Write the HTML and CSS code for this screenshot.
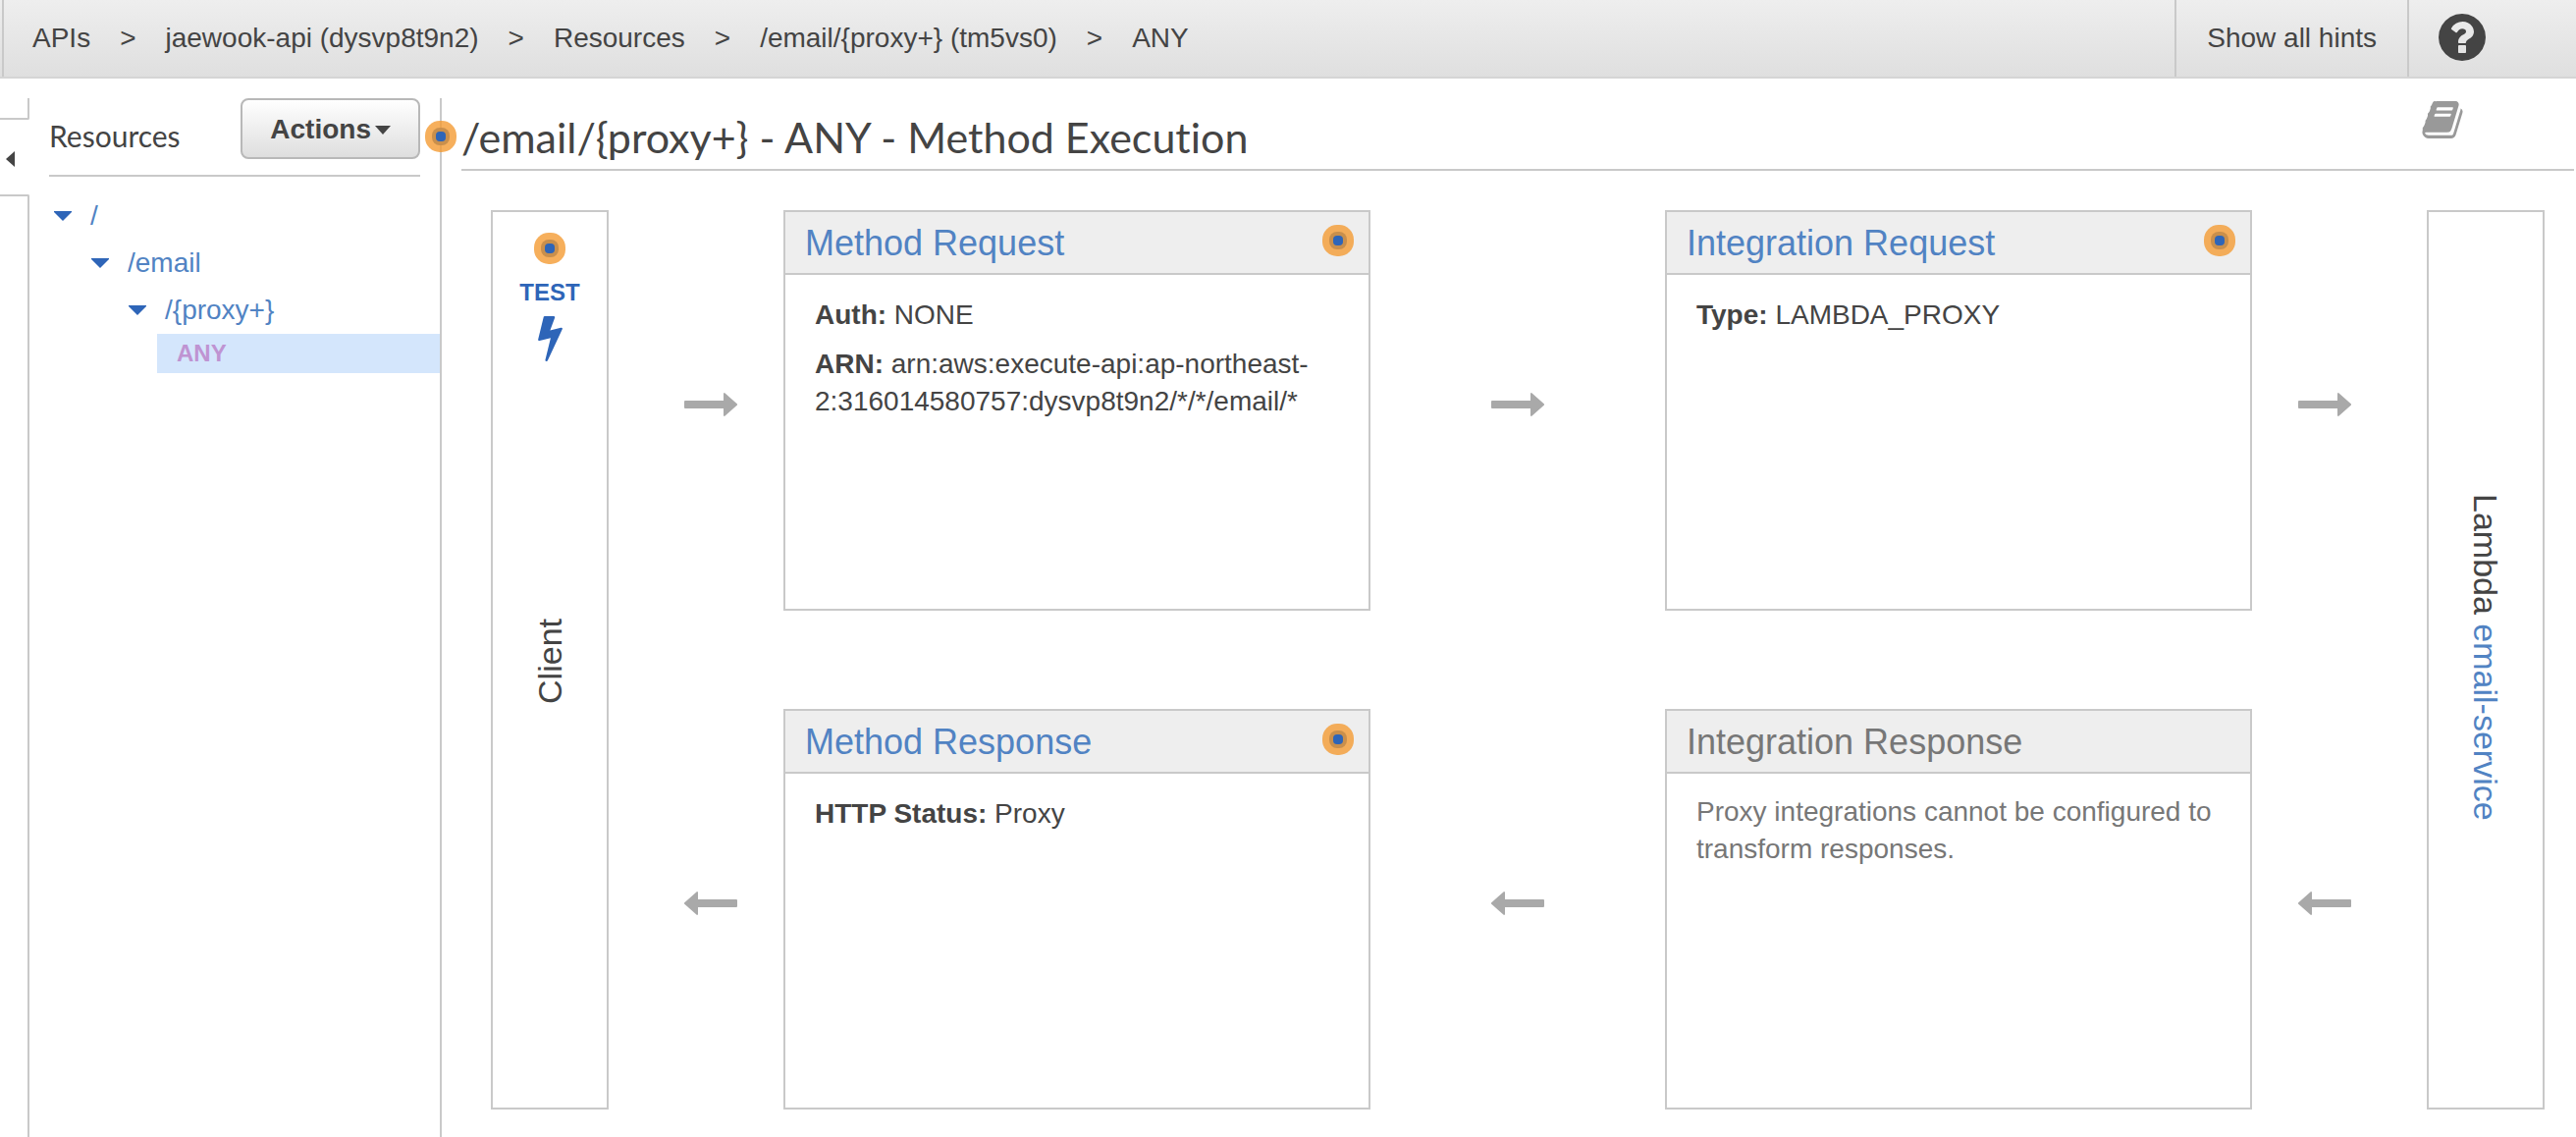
FILE: index.html
```html
<!DOCTYPE html>
<html lang="en">
<head>
<meta charset="utf-8">
<title>API Gateway - Method Execution</title>
<link rel="stylesheet" href="styles.css">
</head>
<body>
<svg class="defs" aria-hidden="true">
  <symbol id="hint" viewBox="0 0 32 32">
    <rect width="32" height="32" rx="15" fill="#f49b33" fill-opacity=".8"/>
    <rect x="7" y="7" width="18" height="18" rx="8" fill="#c98f4c"/>
    <rect x="11" y="11" width="10" height="10" rx="4" fill="#2e65b8"/>
  </symbol>
  <symbol id="arrow-right" viewBox="0 0 54 24">
    <path d="M1 8h39V1q0-1 1-1l13 11.500v1L41 24q-1 0-1-1v-7H1q-1 0-1-1V9q0-1 1-1z" fill="#a9a9a9"/>
  </symbol>
  <symbol id="arrow-left" viewBox="0 0 54 24">
    <path d="M53 8H14V1q0-1-1-1L0 11.500v1L13 24q1 0 1-1v-7h39q1 0 1-1V9q0-1-1-1z" fill="#a9a9a9"/>
  </symbol>
</svg>

<header class="topbar">
  <nav class="crumbs" aria-label="Breadcrumb">
    <a href="#apis">APIs</a><span class="sep">&gt;</span>
    <a href="#api">jaewook-api (dysvp8t9n2)</a><span class="sep">&gt;</span>
    <a href="#resources">Resources</a><span class="sep">&gt;</span>
    <a href="#resource">/email/{proxy+} (tm5vs0)</a><span class="sep">&gt;</span>
    <a href="#method">ANY</a>
  </nav>
  <button class="hints" type="button">Show all hints</button>
  <a class="help" href="#help" aria-label="Help">
    <svg class="help-icon" viewBox="128 128 1536 1536"><path fill="#444" d="M1024 1376v-192q0-14-9-23t-23-9h-192q-14 0-23 9t-9 23v192q0 14 9 23t23 9h192q14 0 23-9t9-23zm256-672q0-88-55.500-163t-138.500-116-170-41q-243 0-371 213-15 24 8 42l132 100q7 6 19 6 16 0 25-12 53-68 86-92 34-24 86-24 48 0 85.500 26t37.500 59q0 38-20 61t-68 45q-63 28-115.500 86.500t-52.500 125.500v36q0 14 9 23t23 9h192q14 0 23-9t9-23q0-19 21.500-49.500t54.500-49.500q32-18 49-28.500t46-35 44.500-48 28-60.500 12.500-81zm384 192q0 209-103 385.500t-279.500 279.500-385.500 103-385.500-103-279.500-279.500-103-385.500 103-385.500 279.500-279.500 385.500-103 385.500 103 279.500 279.500 103 385.500z"/></svg>
  </a>
</header>

<div class="workspace">
  <div class="rail">
    <div class="rail-top"></div>
    <button class="collapse" type="button" aria-label="Collapse panel">
      <svg class="collapse-icon" viewBox="0 0 9 16"><path d="M9 0v16L0 8z" fill="#444"/></svg>
    </button>
    <div class="rail-bottom"></div>
  </div>

  <aside class="sidebar">
    <div class="sidebar-head">
      <h2 class="sidebar-title">Resources</h2>
      <button class="actions" type="button">Actions<svg class="actions-caret" viewBox="0 0 16 9"><path d="M0 0h16L8 9z" fill="#444"/></svg></button>
    </div>
    <ul class="tree">
      <li class="node"><svg class="caret" viewBox="0 0 18 10"><path d="M0 0h18v1L9 10 0 1z" fill="#2e65b8"/></svg><a href="#root">/</a></li>
      <li class="node level-1"><svg class="caret" viewBox="0 0 18 10"><path d="M0 0h18v1L9 10 0 1z" fill="#2e65b8"/></svg><a href="#email">/email</a></li>
      <li class="node level-2"><svg class="caret" viewBox="0 0 18 10"><path d="M0 0h18v1L9 10 0 1z" fill="#2e65b8"/></svg><a href="#proxy">/{proxy+}</a></li>
      <li class="leaf"><a href="#any">ANY</a></li>
    </ul>
  </aside>

  <main class="content">
    <div class="title-row">
      <svg class="hint title-hint"><use href="#hint"/></svg>
      <h1 class="title">/email/{proxy+} - ANY - Method Execution</h1>
      <a class="docs" href="#docs" aria-label="Documentation">
        <svg class="docs-icon" viewBox="64 128 1664 1536"><path fill="#999" d="M1703 478q40 57 18 129l-275 906q-19 64-76.500 107.500t-122.500 43.500h-923q-77 0-148.500-53.500t-99.500-131.500q-24-67-2-127 0-4 3-27t4-37q1-8-3-21.500t-3-19.500q2-11 8-21t16.500-23.500 16.500-23.500q23-38 45-91.500t30-91.500q3-10 .5-30t-.5-28q3-11 17-28t17-23q21-36 42-92t25-90q1-9-2.500-32t.5-28q4-13 22-30.500t22-22.500q19-26 42.500-84.500t27.500-96.500q1-8-3-25.500t-2-26.500q2-8 9-18t18-23 17-21q8-12 16.500-30.500t15-35 16-36 19.500-32 26.500-23.500 36-11.500 47.500 5.500l-1 3q38-9 51-9h761q74 0 114 56t18 130l-274 906q-36 119-71.500 153.500t-128.500 34.500h-869q-27 0-38 15-11 16-1 43 24 70 144 70h923q29 0 56-15.500t35-41.500l300-987q7-22 5-57 38 15 59 43zm-1064 2q-4 13 2 22.500t20 9.500h608q13 0 25.500-9.500t16.500-22.500l21-64q4-13-2-22.500t-20-9.500h-608q-13 0-25.500 9.500t-16.500 22.500zm-83 256q-4 13 2 22.500t20 9.500h608q13 0 25.500-9.500t16.500-22.500l21-64q4-13-2-22.500t-20-9.500h-608q-13 0-25.500 9.500t-16.500 22.500z"/></svg>
      </a>
    </div>

    <div class="flow">
      <section class="endpoint client">
        <a class="test" href="#test">
          <svg class="hint"><use href="#hint"/></svg>
          <span class="test-label">TEST</span>
          <svg class="bolt" viewBox="448 128 896 1664"><path fill="#2e65b8" d="M1333 566q18 20 7 44l-540 1157q-13 25-42 25-4 0-14-2-17-5-25.500-19t-4.500-30l197-808-406 101q-4 1-12 1-18 0-31-11-18-15-13-39l201-825q4-14 16-23t28-9h328q19 0 32 12.500t13 29.500q0 8-5 18l-171 463 396-98q8-2 12-2 19 0 34 15z"/></svg>
        </a>
        <div class="endpoint-label client-label">Client</div>
      </section>

      <svg class="arrow out-client"><use href="#arrow-right"/></svg>
      <section class="card">
        <div class="card-head"><h3><a href="#method-request">Method Request</a></h3><svg class="hint"><use href="#hint"/></svg></div>
        <div class="card-body">
          <p><b>Auth:</b> NONE</p>
          <p><b>ARN:</b> arn:aws:execute-api:ap-northeast-2:316014580757:dysvp8t9n2/*/*/email/*</p>
        </div>
      </section>
      <svg class="arrow"><use href="#arrow-right"/></svg>
      <section class="card">
        <div class="card-head"><h3><a href="#integration-request">Integration Request</a></h3><svg class="hint"><use href="#hint"/></svg></div>
        <div class="card-body"><p><b>Type:</b> LAMBDA_PROXY</p></div>
      </section>
      <svg class="arrow out-lambda"><use href="#arrow-right"/></svg>

      <section class="endpoint lambda">
        <div class="endpoint-label">Lambda <a href="#lambda">email-service</a></div>
      </section>

      <svg class="arrow out-client"><use href="#arrow-left"/></svg>
      <section class="card">
        <div class="card-head"><h3><a href="#method-response">Method Response</a></h3><svg class="hint"><use href="#hint"/></svg></div>
        <div class="card-body"><p><b>HTTP Status:</b> Proxy</p></div>
      </section>
      <svg class="arrow"><use href="#arrow-left"/></svg>
      <section class="card muted">
        <div class="card-head"><h3>Integration Response</h3></div>
        <div class="card-body"><p>Proxy integrations cannot be configured to transform responses.</p></div>
      </section>
      <svg class="arrow out-lambda"><use href="#arrow-left"/></svg>
    </div>
  </main>
</div>
</body>
</html>
```
FILE: styles.css
```css
* {
  box-sizing: border-box;
}

body {
  margin: 0;
  min-height: 100vh;
  display: flex;
  flex-direction: column;
  background: #fff;
  color: #444;
  font: 28px/38px "Liberation Sans", Arial, sans-serif;
}

h1, h2, h3, p, ul {
  margin: 0;
  padding: 0;
  font-weight: normal;
}

a {
  color: #5183c3;
  text-decoration: none;
}

button {
  font: inherit;
  color: inherit;
  cursor: pointer;
}

svg {
  display: block;
  flex: none;
}

.defs {
  position: absolute;
  width: 0;
  height: 0;
}

.hint {
  width: 32px;
  height: 32px;
}

/* Top bar */
.topbar {
  display: flex;
  height: 80px;
  padding-left: 2px;
  border-bottom: 2px solid #d5d5d5;
  background: linear-gradient(#eee, #dfdfdf);
}

.crumbs {
  flex: 1;
  display: flex;
  align-items: center;
  padding-left: 29px;
  border-left: 2px solid #c9c9c9;
  white-space: nowrap;
}

.crumbs a {
  color: #444;
}

.sep {
  margin: 0 30px;
}

.hints {
  padding: 0 31px;
  border: solid #c9c9c9;
  border-width: 0 2px;
  background: none;
}

.help {
  display: flex;
  align-items: center;
  padding: 0 92px 2px 30px;
}

.help-icon {
  width: 48px;
  height: 48px;
}

/* Workspace */
.workspace {
  flex: 1;
  display: flex;
  padding-top: 20px;
}

.rail {
  width: 30px;
  display: flex;
  flex-direction: column;
}

.rail-top {
  height: 22px;
  border: solid #c9c9c9;
  border-width: 0 2px 2px 0;
  border-bottom-right-radius: 2px;
}

.collapse {
  height: 76px;
  padding: 4px 0 0 6px;
  border: 0;
  background: none;
}

.collapse-icon {
  width: 9px;
  height: 16px;
}

.rail-bottom {
  flex: 1;
  border: solid #c9c9c9;
  border-width: 2px 2px 0 0;
  border-top-right-radius: 2px;
}

.sidebar {
  width: 420px;
  padding-left: 20px;
  border-right: 2px solid #c9c9c9;
}

.sidebar-head {
  display: flex;
  justify-content: space-between;
  margin-right: 20px;
  padding-bottom: 16px;
  border-bottom: 2px solid #c9c9c9;
}

.sidebar-title {
  padding-top: 19px;
  font-family: Lato, sans-serif;
  font-size: 30px;
}

.actions {
  display: flex;
  align-items: center;
  gap: 4px;
  height: 62px;
  padding: 2px 28px 0;
  border: 2px solid #b8b8b8;
  border-radius: 8px;
  background: linear-gradient(#fff, #dedede);
  font-weight: bold;
}

.actions-caret {
  width: 16px;
  height: 9px;
}

.tree {
  padding-top: 16px;
  list-style: none;
}

.node {
  display: flex;
  align-items: center;
  gap: 19px;
  height: 48px;
  padding-left: 5px;
}

.level-1 {
  padding-left: 43px;
}

.level-2 {
  padding-left: 81px;
}

.caret {
  width: 18px;
  height: 10px;
}

.leaf {
  margin-left: 110px;
  padding-left: 20px;
  background: #d4e6fc;
  font-size: 24px;
  font-weight: bold;
  line-height: 40px;
}

.leaf a {
  color: #bf94d2;
}

/* Content */
.content {
  flex: 1;
  padding: 0 2px 28px 20px;
}

.title-row {
  position: relative;
  display: flex;
  justify-content: space-between;
  height: 74px;
  padding-right: 113px;
  border-bottom: 2px solid #c9c9c9;
}

.title-hint {
  position: absolute;
  left: -37px;
  top: 23px;
}

.title {
  padding-top: 16px;
  font-family: Lato, sans-serif;
  font-size: 43px;
  font-variant-ligatures: none;
  line-height: 48px;
}

.docs {
  padding-top: 3px;
}

.docs-icon {
  width: 42px;
  height: 38px;
}

/* Request and response flow */
.flow {
  display: grid;
  grid-template-columns: 120px 178px 1fr 300px 1fr 178px 120px;
  grid-auto-rows: minmax(408px, auto);
  row-gap: 100px;
  margin: 40px 30px 0;
}

.endpoint {
  grid-row: 1 / 3;
  display: flex;
  align-items: center;
  flex-direction: column;
  border: 2px solid #c9c9c9;
}

.client {
  grid-column: 1;
}

.lambda {
  grid-column: 7;
  justify-content: center;
  padding-bottom: 6px;
}

.endpoint-label {
  writing-mode: vertical-rl;
  font-size: 34px;
  line-height: 40px;
}

.client-label {
  margin-top: 262px;
  transform: rotate(180deg);
}

.test {
  display: flex;
  flex-direction: column;
  align-items: center;
  padding-top: 21px;
  color: #2e65b8;
  font-size: 24px;
  font-weight: bold;
}

.test-label {
  margin: 10px 0 5px;
}

.bolt {
  width: 25px;
  height: 46px;
}

.arrow {
  width: 54px;
  height: 24px;
  margin-bottom: 12px;
  align-self: center;
  justify-self: center;
}

.out-client {
  grid-column: 2;
  justify-self: start;
  margin-left: 77px;
}

.out-lambda {
  justify-self: start;
  margin-left: 47px;
}

.card {
  border: 2px solid #c9c9c9;
}

.card-head {
  display: flex;
  align-items: flex-start;
  justify-content: space-between;
  height: 64px;
  padding: 13px 15px 0 20px;
  border-bottom: 2px solid #c9c9c9;
  background: #eee;
}

.card-head h3 {
  font-size: 36px;
}

.card-body {
  display: flex;
  flex-direction: column;
  gap: 12px;
  padding: 22px 30px;
}

.muted {
  color: #777;
}

.muted .card-body {
  padding-top: 20px;
}
```
